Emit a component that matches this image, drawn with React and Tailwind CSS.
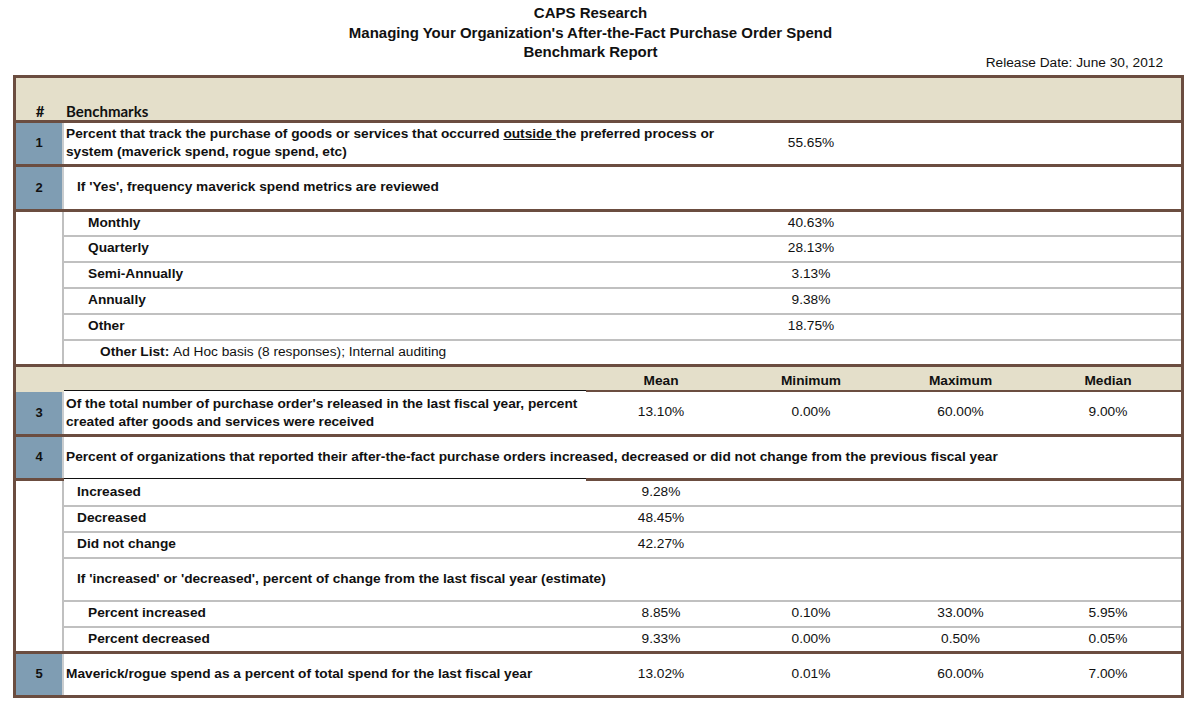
const font = { fontFamily: '"Liberation Sans", Arial, sans-serif' }

function Vals({ v = [], bold = false }) {
  const cls = bold ? 'font-bold' : ''
  return (
    <>
      <div className={`w-[150px] text-center ${cls}`}>{v[0]}</div>
      <div className={`w-[150px] text-center ${cls}`}>{v[1]}</div>
      <div className={`w-[149px] text-center ${cls}`}>{v[2]}</div>
      <div className={`flex-1 text-center ${cls}`}>{v[3]}</div>
    </>
  )
}

function NumCell({ n }) {
  return (
    <div className="w-[48px] shrink-0 bg-[#7f9db3] border-r-2 border-[#c9ccce] flex items-center justify-center font-bold text-[13px]">
      {n}
    </div>
  )
}

function SubRow({ label, pad, vals, h, last }) {
  return (
    <div
      className={`flex items-center font-bold ${h} ${last ? '' : 'border-b-2 border-[#c0c0c0]'}`}
    >
      <div className={`w-[522px] shrink-0 ${pad} whitespace-nowrap`}>{label}</div>
      <div className="flex flex-1 font-normal">
        <Vals v={vals} />
      </div>
    </div>
  )
}

function SplitLine({ h = 'h-[3px]', left = 'bg-[#6b4d40]' }) {
  return (
    <div className={`flex ${h}`}>
      <div className={`w-[48px] ${left}`} />
      <div className="w-[522px] border-t border-[#111]" />
      <div className="flex-1 bg-[#6b4d40]" />
    </div>
  )
}

export default function App() {
  const freq = [
    ['Monthly', '40.63%', 'h-[25px]'],
    ['Quarterly', '28.13%', 'h-[26px]'],
    ['Semi-Annually', '3.13%', 'h-[26px]'],
    ['Annually', '9.38%', 'h-[26px]'],
    ['Other', '18.75%', 'h-[26px]'],
  ]

  return (
    <div className="w-[1195px] h-[708px] bg-white text-[#111] text-[13.7px]" style={font}>
      <div className="grid grid-cols-[1fr_auto_1fr]">
        <div />
        <div className="mr-[14px] pt-[3px] pb-[11px] text-center font-bold text-[15px] leading-[19.5px]">
          <div>CAPS Research</div>
          <div>Managing Your Organization's After-the-Fact Purchase Order Spend</div>
          <div>Benchmark Report</div>
        </div>
        <div className="flex items-end justify-end pr-[32px] pb-[2px]">
          <span className="leading-[16px]">Release Date: June 30, 2012</span>
        </div>
      </div>

      <div className="ml-[13px] mt-[2px] w-[1171px] border-[3px] border-[#6b4d40]">
        {/* header */}
        <div
          className="flex h-[45px] items-end bg-[#e4dfca] border-b-[3px] border-[#6b4d40] font-bold text-[15px] leading-[18px]"
          style={{ fontFamily: 'Lato, "Open Sans", sans-serif' }}
        >
          <div className="w-[48px] text-center">#</div>
          <div className="pl-[2px]">Benchmarks</div>
        </div>

        {/* 1 */}
        <div className="flex h-[44px] border-b-[3px] border-[#6b4d40]">
          <NumCell n="1" />
          <div className="w-[672px] shrink-0 pl-[2px] flex items-center font-bold leading-[18px] whitespace-nowrap">
            <div>
              Percent that track the purchase of goods or services that occurred <span className="underline">outside </span>the preferred process or
              <br />
              system (maverick spend, rogue spend, etc)
            </div>
          </div>
          <div className="w-[150px] flex items-center justify-center">55.65%</div>
        </div>

        {/* 2 */}
        <div className="flex h-[45px] border-b-[3px] border-[#6b4d40]">
          <NumCell n="2" />
          <div className="pl-[13px] flex items-center font-bold">
            If 'Yes', frequency maverick spend metrics are reviewed
          </div>
        </div>

        <div className="flex border-b-[3px] border-[#6b4d40]">
          <div className="w-[48px] shrink-0 border-r-2 border-[#c0c0c0]" />
          <div className="flex-1 flex flex-col">
            {freq.map(([l, v, h]) => (
              <SubRow key={l} label={l} pad="pl-[24px]" vals={['', v]} h={h} />
            ))}
            <div className="flex items-center h-[23px] pl-[36px]">
              <span className="font-bold">Other List:</span>
              <span>&nbsp;Ad Hoc basis (8 responses); Internal auditing</span>
            </div>
          </div>
        </div>

        {/* stats header */}
        <div className="flex h-[23px] items-start pt-[6px] leading-[16px] bg-[#e4dfca]">
          <div className="w-[570px] shrink-0" />
          <div className="flex flex-1">
            <Vals v={['Mean', 'Minimum', 'Maximum', 'Median']} bold />
          </div>
        </div>
        <SplitLine h="h-[2px]" left="bg-[#e4dfca]" />

        {/* 3 */}
        <div className="flex h-[45px] border-b-[3px] border-[#6b4d40]">
          <NumCell n="3" />
          <div className="w-[522px] shrink-0 pl-[2px] flex items-center font-bold leading-[18px] whitespace-nowrap">
            <div>
              Of the total number of purchase order's released in the last fiscal year, percent
              <br />
              created after goods and services were received
            </div>
          </div>
          <div className="flex flex-1 items-center">
            <Vals v={['13.10%', '0.00%', '60.00%', '9.00%']} />
          </div>
        </div>

        {/* 4 */}
        <div className="flex h-[41px]">
          <NumCell n="4" />
          <div className="pl-[2px] flex items-center font-bold whitespace-nowrap">
            Percent of organizations that reported their after-the-fact purchase orders increased, decreased or did not change from the previous fiscal year
          </div>
        </div>
        <SplitLine />

        <div className="flex border-b-[3px] border-[#6b4d40]">
          <div className="w-[48px] shrink-0 border-r-2 border-[#c0c0c0]" />
          <div className="flex-1 flex flex-col">
            <SubRow label="Increased" pad="pl-[13px]" vals={['9.28%']} h="h-[26px]" />
            <SubRow label="Decreased" pad="pl-[13px]" vals={['48.45%']} h="h-[26px]" />
            <SubRow label="Did not change" pad="pl-[13px]" vals={['42.27%']} h="h-[26px]" />
            <SubRow
              label="If 'increased' or 'decreased', percent of change from the last fiscal year (estimate)"
              pad="pl-[13px]"
              vals={[]}
              h="h-[43px]"
            />
            <SubRow
              label="Percent increased"
              pad="pl-[24px]"
              vals={['8.85%', '0.10%', '33.00%', '5.95%']}
              h="h-[26px]"
            />
            <SubRow
              label="Percent decreased"
              pad="pl-[24px]"
              vals={['9.33%', '0.00%', '0.50%', '0.05%']}
              h="h-[23px]"
              last
            />
          </div>
        </div>

        {/* 5 */}
        <div className="flex h-[41px]">
          <NumCell n="5" />
          <div className="w-[522px] shrink-0 pl-[2px] flex items-center font-bold whitespace-nowrap">
            Maverick/rogue spend as a percent of total spend for the last fiscal year
          </div>
          <div className="flex flex-1 items-center">
            <Vals v={['13.02%', '0.01%', '60.00%', '7.00%']} />
          </div>
        </div>
      </div>
    </div>
  )
}
